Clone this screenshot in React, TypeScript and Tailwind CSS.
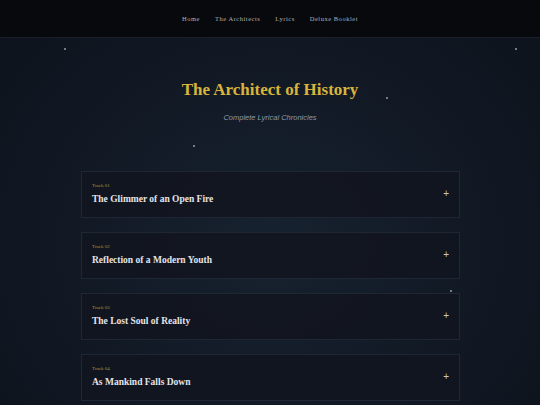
import React from "react";

const tracks = [
  { n: "01", t: "The Glimmer of an Open Fire" },
  { n: "02", t: "Reflection of a Modern Youth" },
  { n: "03", t: "The Lost Soul of Reality" },
  { n: "04", t: "As Mankind Falls Down" },
];

const stars = [
  { x: 64, y: 48 },
  { x: 515, y: 48 },
  { x: 386, y: 97 },
  { x: 193, y: 145 },
  { x: 450, y: 290 },
];

export default function App() {
  return (
    <div
      className="relative w-[540px] h-[405px] overflow-hidden bg-[#111823]"
      style={{
        background:
          "radial-gradient(ellipse at 50% 60%, #172230 0%, #121a26 45%, #0d121b 100%)",
      }}
    >
      {stars.map((s, i) => (
        <div
          key={i}
          className="absolute w-[2px] h-[2px] bg-[#9aa6b5] opacity-70"
          style={{ left: s.x, top: s.y }}
        />
      ))}
      <nav className="h-[38px] bg-[#08090d] border-b border-[#1a1f29] flex items-center justify-center gap-[15px] pt-[1px] font-['Liberation_Serif',serif] text-[6.5px] tracking-[0.08em] text-[#b0b0b4]">
        <span>Home</span>
        <span>The Architects</span>
        <span>Lyrics</span>
        <span>Deluxe Booklet</span>
      </nav>
      <header className="flex flex-col items-center pt-[43px]">
        <h1 className="font-['Liberation_Serif',serif] font-bold text-[17px] text-[#d8b43c] leading-none">
          The Architect of History
        </h1>
        <p className="mt-[16px] font-['Liberation_Sans',sans-serif] italic text-[7.5px] text-[#8d9aae] leading-none">
          Complete Lyrical Chronicles
        </p>
      </header>
      <main className="flex flex-col gap-[14px] mx-[81px] mt-[49px] w-[379px]">
        {tracks.map((tr) => (
          <div
            key={tr.n}
            className="h-[47px] border border-[#1f2634] bg-[#12151f]/90 flex items-center justify-between pl-[10px] pr-[10px]"
          >
            <div className="flex flex-col">
              <span className="font-['Liberation_Serif',serif] text-[5px] text-[#b0923a] leading-none">
                Track {tr.n}
              </span>
              <span className="mt-[7px] font-['Liberation_Serif',serif] font-bold text-[9.5px] text-[#e4e4e8] leading-none">
                {tr.t}
              </span>
            </div>
            <span className="font-['Liberation_Sans',sans-serif] text-[10px] text-[#c8c8cc] leading-none">
              +
            </span>
          </div>
        ))}
      </main>
    </div>
  );
}
